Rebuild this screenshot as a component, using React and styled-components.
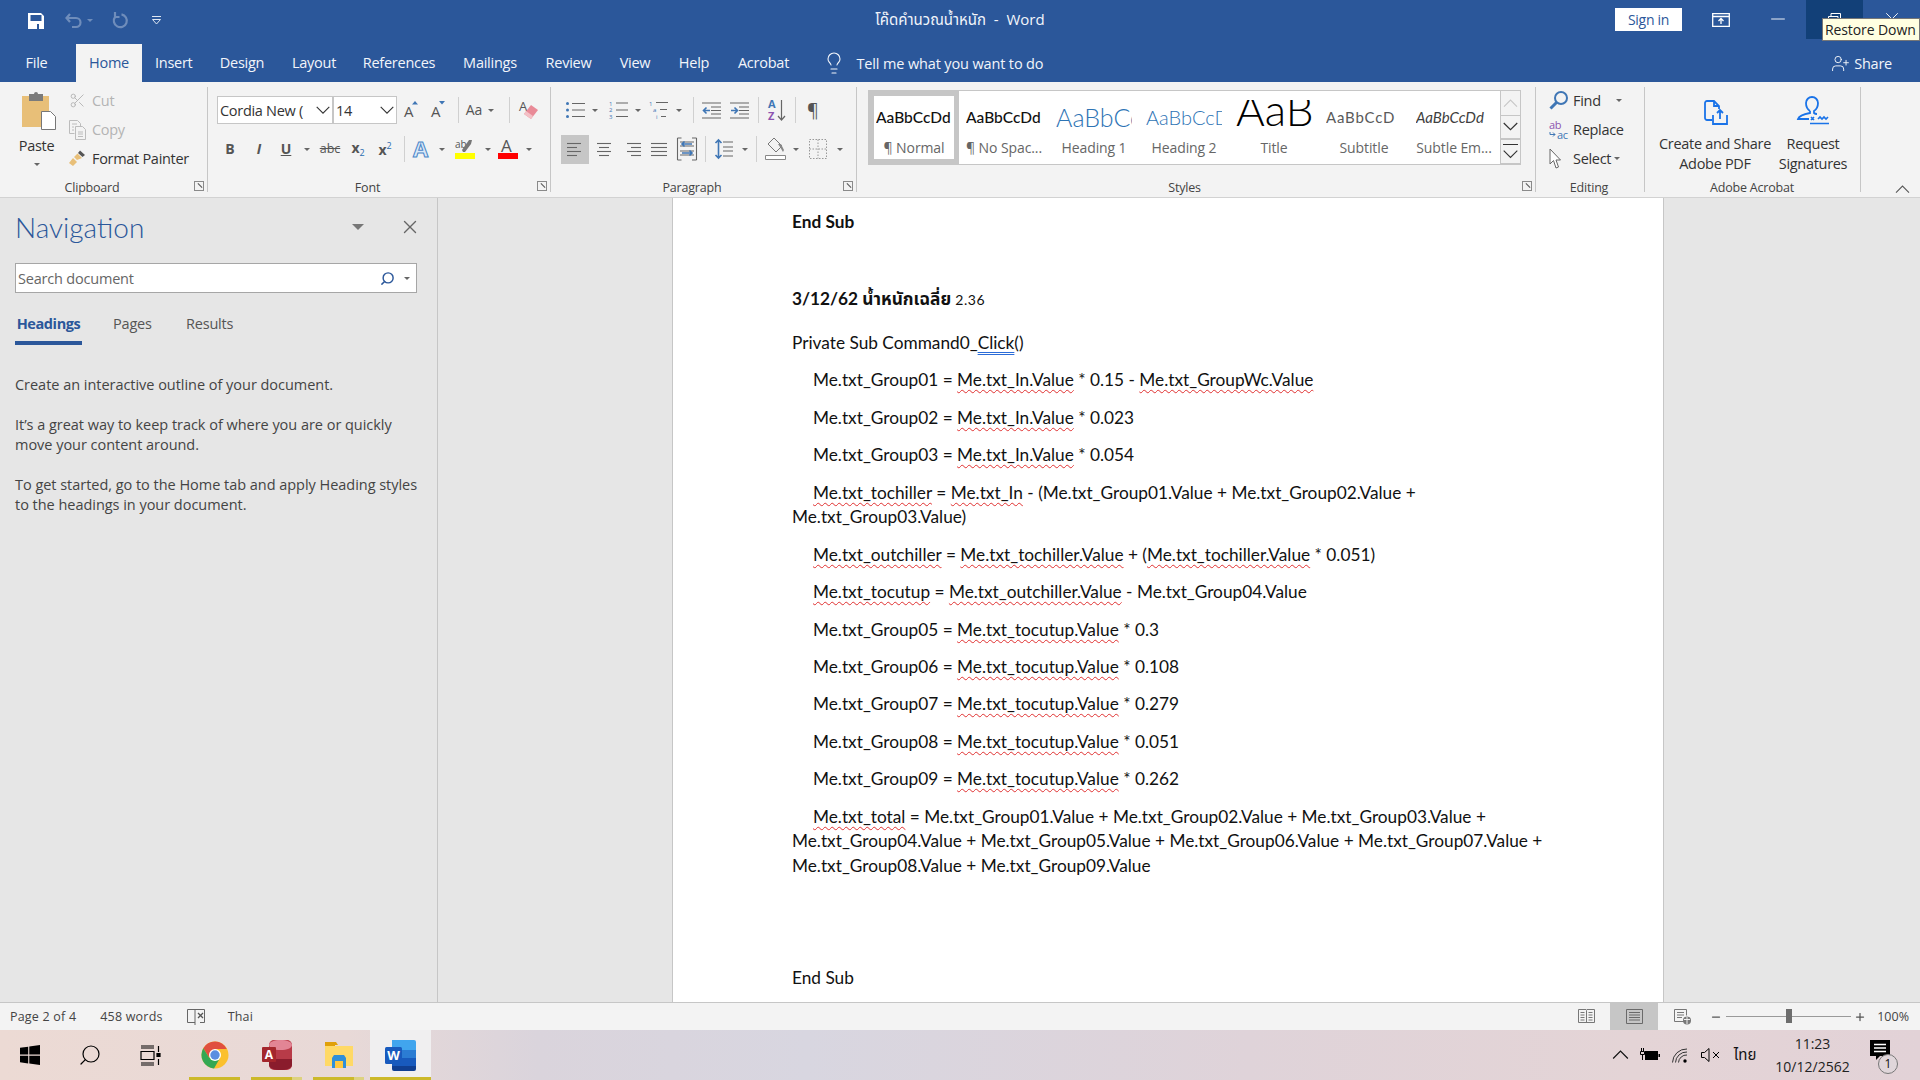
import React from 'react';
import styled, { createGlobalStyle, css } from 'styled-components';
import { Lightbulb, X, Scissors, Search, UserPlus, Minus, Plus } from 'lucide-react';

const UI = '"Open Sans","Noto Sans","Noto Sans Thai",sans-serif';
const BLUE = '#2b579a';

const Global = createGlobalStyle`
  html,body{margin:0;padding:0;width:1920px;height:1080px;overflow:hidden;background:#e6e6e6;}
  *{box-sizing:border-box;}
  body{font-family:${UI};color:#444;}
  svg{display:block;flex:none;overflow:visible;}
`;

const Shell = styled.div`width:1920px;height:1080px;display:flex;flex-direction:column;overflow:hidden;`;
const Mirror = styled.span`display:block;transform:scaleX(-1);`;

/* ---------- title bar ---------- */
const TitleBar = styled.header`height:41px;background:${BLUE};display:grid;grid-template-columns:1fr auto 1fr;align-items:start;color:#fff;`;
const Qat = styled.div`display:flex;align-items:center;height:41px;padding:0 0 0 28px;`;
const QatCell = styled.div`width:${p=>p.$w}px;display:flex;align-items:center;flex:none;`;
const DocTitle = styled.div`height:41px;line-height:39px;font-size:15px;white-space:pre;color:#f2f5fa;`;
const WinRight = styled.div`display:flex;justify-content:flex-end;align-items:flex-start;position:relative;`;
const SignIn = styled.div`width:67px;height:23px;margin:8px 10px 0 0;background:#fff;color:${BLUE};font-size:14px;line-height:23px;text-align:center;letter-spacing:-.3px;`;
const WinBtn = styled.div`width:57px;height:39px;display:flex;align-items:flex-start;justify-content:center;padding-top:${p=>p.$pt||13}px;background:${p=>p.$hover?'#124078':'transparent'};`;
const Tooltip = styled.div`position:absolute;top:18px;right:0;width:98px;height:23px;background:#ffffe1;border:1px solid #767676;color:#222;font-size:14px;line-height:22px;padding-left:2px;white-space:nowrap;letter-spacing:-.1px;`;

/* ---------- tabs ---------- */
const TabBar = styled.nav`height:41px;background:${BLUE};display:flex;align-items:flex-end;color:#fff;font-size:14.5px;letter-spacing:-.25px;`;
const Tab = styled.div`width:${p=>p.$w}px;padding-right:${p=>p.$pr||0}px;height:38px;line-height:37px;text-align:center;color:${p=>p.$on?BLUE:'#f2f5fa'};background:${p=>p.$on?'#f3f3f3':'transparent'};`;
const TellMe = styled.div`display:flex;align-items:center;height:38px;gap:11px;margin-left:18px;color:#f2f5fa;letter-spacing:-.14px;`;
const Share = styled.div`margin-left:auto;height:41px;display:flex;align-items:center;gap:4px;padding:4px 28px 0 0;color:#f2f5fa;`;

/* ---------- ribbon ---------- */
const Ribbon = styled.section`height:116px;background:#f3f3f3;border-bottom:1px solid #d2d2d2;display:flex;position:relative;`;
const Group = styled.div`width:${p=>p.$w}px;height:115px;display:flex;flex-direction:column;position:relative;flex:none;
  &::after{content:"";position:absolute;right:0;top:5px;bottom:5px;width:1px;background:#c6c6c6;}`;
const GroupBody = styled.div`flex:1;min-height:0;display:flex;padding:${p=>p.$pad||'0'};`;
const GroupLabel = styled.div`height:20px;line-height:22px;text-align:center;font-size:12.5px;color:#444;letter-spacing:-.2px;position:relative;padding-right:${p=>p.$pr||0}px;`;
const Launcher = styled.span`position:absolute;right:4px;top:4px;width:10px;height:10px;border:1px solid #8a8a8a;
  &::after{content:"";position:absolute;left:2px;top:3px;width:6px;height:1px;background:#555;transform:rotate(45deg);}`;
const Rows = styled.div`display:flex;flex-direction:column;`;
const ToolRow = styled.div`display:flex;align-items:center;height:${p=>p.$h||26}px;margin-top:${p=>p.$mt||0}px;`;
const Tool = styled.div`width:${p=>p.$w}px;height:29px;display:flex;align-items:center;justify-content:center;background:${p=>p.$on?'#c6c6c6':'transparent'};flex:none;`;
const Sep = styled.div`width:1px;height:${p=>p.$h||26}px;background:#d0d0d0;margin-left:${p=>p.$m||0}px;flex:none;`;
const Caret = styled.i`display:block;width:0;height:0;border-left:3px solid transparent;border-right:3px solid transparent;border-top:3px solid ${p=>p.$c||'#666'};flex:none;margin-left:${p=>p.$ml||0}px;`;
const Combo = styled.div`height:28px;width:${p=>p.$w}px;background:#fff;border:1px solid #c6c6c6;display:flex;align-items:center;justify-content:space-between;padding:0 2px 0 2px;font-size:14.5px;letter-spacing:-.3px;color:#333;overflow:hidden;white-space:nowrap;flex:none;`;
const FormatGlyph = styled.span`font-family:${UI};font-size:${p=>p.$s||14}px;font-weight:${p=>p.$b?700:400};font-style:${p=>p.$i?'italic':'normal'};color:#555;line-height:1;${p=>p.$u&&css`text-decoration:underline;`}${p=>p.$st&&css`text-decoration:line-through;`}`;
const Sub = styled.sub`font-size:9px;color:#2b6cb0;vertical-align:-3px;font-weight:400;`;
const Sup = styled.sup`font-size:9px;color:#2b6cb0;vertical-align:6px;font-weight:400;`;
const PasteBlock = styled.div`width:65px;margin-left:4px;display:flex;flex-direction:column;align-items:center;padding-top:10px;font-size:14.5px;letter-spacing:-.3px;color:#333;line-height:20px;`;
const PasteIconWrap = styled.div`margin-left:5px;`;
const PasteText = styled.div`margin:6px 0 7px;`;
const SmallCol = styled.div`display:flex;flex-direction:column;padding-top:4px;`;
const SmallBtn = styled.div`height:29px;display:flex;align-items:center;font-size:14.5px;letter-spacing:-.3px;color:${p=>p.$off?'#b4b4b4':'#333'};white-space:nowrap;`;
const SmallIcon = styled.span`width:${p=>p.$w||23}px;display:flex;align-items:center;justify-content:flex-start;flex:none;`;
const Gallery = styled.div`width:653px;height:75px;margin:8px 0 0 11px;display:flex;border:1px solid #c6c6c6;background:#fff;`;
const StyleItem = styled.div`width:90px;height:73px;flex:none;display:flex;flex-direction:column;align-items:center;overflow:hidden;padding-bottom:6px;${p=>p.$on&&css`box-shadow:inset 0 0 0 5px #c6c6c6;`}`;
const Preview = styled.div`margin-top:${p=>p.$top??4}px;height:${p=>p.$h||44}px;line-height:${p=>p.$lh||'44px'};width:76px;overflow:hidden;white-space:nowrap;text-align:left;font-family:Lato,sans-serif;color:${p=>p.$c||'#111'};font-size:${p=>p.$s||15.5}px;font-style:${p=>p.$i?'italic':'normal'};font-weight:${p=>p.$w||500};letter-spacing:${p=>p.$ls||0}px;`;
const PreviewLabel = styled.div`font-size:14px;letter-spacing:-.1px;color:#666;white-space:nowrap;line-height:20px;margin-top:auto;`;
const GalleryScroll = styled.div`display:flex;flex-direction:column;margin-left:auto;width:21px;margin-top:-1px;margin-right:-1px;`;
const ScrollBtn = styled.div`height:${p=>p.$h}px;border:1px solid #c6c6c6;margin-top:${p=>p.$mt||0}px;display:flex;align-items:center;justify-content:center;background:#f3f3f3;`;
const BigBtn = styled.div`width:${p=>p.$w}px;display:flex;flex-direction:column;align-items:center;padding-top:12px;font-size:14.5px;letter-spacing:-.3px;line-height:20px;color:#333;text-align:center;white-space:nowrap;`;
const BigIcon = styled.div`height:31px;display:flex;align-items:flex-end;`;
const BigText = styled.div`margin-top:9px;`;
const Collapse = styled.div`position:absolute;right:10px;bottom:4px;`;

/* ---------- main ---------- */
const Main = styled.main`flex:1;min-height:0;display:flex;background:#e6e6e6;`;
const Nav = styled.aside`width:438px;flex:none;border-right:1px solid #c6c6c6;padding:0 16px 0 15px;font-size:14.5px;color:#444;`;
const NavHead = styled.div`display:flex;align-items:center;height:54px;padding-top:4px;`;
const NavTitle = styled.h2`margin:0;font-size:28px;font-weight:300;color:${BLUE};flex:1;font-family:Lato,${UI};`;
const NavCaret = styled.i`width:0;height:0;border-left:6px solid transparent;border-right:6px solid transparent;border-top:6px solid #777;margin-right:35px;`;
const SearchBox = styled.div`height:30px;margin-top:11px;width:402px;background:#fff;border:1px solid #a6a6a6;display:flex;align-items:center;padding:0 6px 0 2px;color:#666;letter-spacing:-.2px;`;
const SearchText = styled.span`flex:1;`;
const NavTabs = styled.div`display:flex;margin-top:14px;height:38px;`;
const NavTab = styled.div`height:38px;line-height:33px;width:${p=>p.$w}px;color:${p=>p.$on?BLUE:'#555'};font-weight:${p=>p.$on?700:400};letter-spacing:-.2px;${p=>p.$on&&css`border-bottom:4px solid ${BLUE};text-align:center;margin-right:31px;letter-spacing:-.4px;`}`;
const NavText = styled.p`margin:${p=>p.$mt}px 0 0;line-height:20px;white-space:nowrap;letter-spacing:-.03px;`;
const Gutter = styled.div`flex:${p=>p.$w?`0 0 ${p.$w}px`:'1'};`;
const Page = styled.article`width:992px;flex:none;background:#fff;border-left:1px solid #c6c6c6;border-right:1px solid #c6c6c6;padding:12px 0 0 119px;font-family:Lato,"Noto Sans Thai",sans-serif;font-size:17.25px;line-height:24.6px;color:#111;overflow:hidden;`;
const Para = styled.p`margin:${p=>p.$mt||0}px 0 0;white-space:nowrap;font-weight:${p=>p.$b?700:400};padding-left:${p=>p.$in?21:0}px;`;
const Sq = styled.span`text-decoration:underline wavy #e03030;text-decoration-thickness:1px;text-underline-offset:3px;`;
const Gr = styled.span`text-decoration:underline double #2b6cd8;text-decoration-thickness:1px;text-underline-offset:3px;`;
const Small = styled.span`font-weight:400;font-size:14px;letter-spacing:.5px;`;

/* ---------- status ---------- */
const Status = styled.footer`height:28px;flex:none;background:#f3f3f3;border-top:1px solid #c6c6c6;display:flex;align-items:center;font-size:12.5px;letter-spacing:.2px;color:#444;`;
const StatusText = styled.span`margin-left:${p=>p.$ml}px;white-space:nowrap;`;
const StatusRight = styled.div`margin-left:auto;height:27px;padding-right:11px;display:flex;align-items:center;letter-spacing:0;`;
const ViewBtn = styled.div`width:48px;height:27px;display:flex;align-items:center;justify-content:center;background:${p=>p.$on?'#c6c6c6':'transparent'};`;
const ZoomOut = styled.span`display:block;margin-left:4px;`;
const Slider = styled.div`width:125px;height:1px;background:#9a9a9a;margin:0 3px 0 4px;position:relative;`;
const Thumb = styled.i`position:absolute;left:60px;top:-7px;width:6px;height:14px;background:#6d6d6d;`;

/* ---------- taskbar ---------- */
const Taskbar = styled.div`height:50px;flex:none;display:flex;align-items:stretch;background:linear-gradient(90deg,#ecdad4 0%,#e8d9d7 18%,#dad4dc 28%,#d8d6e0 42%,#dfd3d9 65%,#e4d4d6 85%,#e2d2d7 100%);`;
const TaskIcon = styled.div`width:${p=>p.$w}px;flex:none;display:flex;align-items:center;justify-content:center;margin-left:${p=>p.$ml||0}px;background:${p=>p.$on?'#f0eff0':'transparent'};position:relative;
  ${p=>p.$run&&css`&::after{content:"";position:absolute;left:0;right:0;bottom:0;height:3px;background:#ccb92a;}`}
  ${p=>p.$extra&&css`&::before{content:"";position:absolute;right:0;bottom:0;width:10px;height:3px;background:#ddd27f;z-index:1;}`}`;
const Tray = styled.div`margin-left:auto;display:flex;align-items:center;color:#111;`;
const TrayCell = styled.div`width:${p=>p.$w}px;display:flex;justify-content:center;align-items:center;font-size:${p=>p.$s||14}px;`;
const Clock = styled.div`width:95px;text-align:center;font-size:14px;line-height:23px;color:#222;`;
const Notify = styled.div`width:60px;position:relative;height:30px;display:flex;justify-content:center;padding-right:20px;`;
const Badge = styled.span`position:absolute;left:18px;top:14px;width:20px;height:20px;border-radius:50%;border:1px solid #777;background:#e0d6da;font-size:12px;line-height:18px;text-align:center;color:#111;`;

/* ---------- icons ---------- */
const SaveIcon=()=>(<svg width="16" height="16" viewBox="0 0 16 16"><path fillRule="evenodd" fill="#fff" d="M0 0h13l3 3v13H0zM2.500 2v6h11V2zM9 11v5h2v-5z"/></svg>);
const UndoIcon=()=>(<svg width="18" height="16" viewBox="0 0 18 16" fill="none" stroke="#6f8dbb" strokeWidth="2.2"><path d="M5 1 1.500 5 5 9M2 5h9a4.500 4.500 0 0 1 0 9H7"/></svg>);
const RedoIcon=()=>(<svg width="16" height="17" viewBox="0 0 16 17" fill="none" stroke="#6f8dbb" strokeWidth="2.200"><path d="M9.500 2.300a6.500 6.500 0 1 1-6.300 2.400M3 0v5h4.500"/></svg>);
const QatMore=()=>(<svg width="11" height="9" viewBox="0 0 11 9" fill="none" stroke="#dfe7f2"><path d="M1 .5h9M1.500 3.500h8L5.500 8z"/></svg>);
const RibbonOpt=()=>(<svg width="18" height="14" viewBox="0 0 18 14" fill="none" stroke="#fff" strokeWidth="1.300"><path d="M.7.7h16.600v12.600H.7zM.7 3.500h16.600"/><path d="M9 11V6M6.500 8 9 5.500 11.500 8"/></svg>);
const RestoreIcon=()=>(<svg width="13" height="12" viewBox="0 0 13 12" fill="none" stroke="#fff"><path d="M3 3V.5h9.500V8H10M.5 3.500h9.500v8H.5z"/></svg>);
const ClipIcon=()=>(<svg width="34" height="38" viewBox="0 0 34 38"><path fill="#e8bf78" d="M0 4h27v31H0z"/><path fill="#7b7b7b" d="M7 2h5a2 2 0 0 1 4 0h5v7H7z"/><path fill="#fff" stroke="#777" d="M19.500 19.500h9l5 5v13h-14z"/></svg>);
const CopyIc=()=>(<svg width="18" height="20" viewBox="0 0 18 20" fill="none" stroke="#bcbcbc"><path d="M.5.500h8l3 3v3M.5.500v13h5M6.500 6.500h7l3 3v10h-10zM3 4h5M3 7h2M3 10h2M9 12h5M9 14h5M9 16.500h5"/></svg>);
const BrushIc=()=>(<svg width="17" height="17" viewBox="0 0 17 17"><path fill="#555" d="M11 .5 16 5l-2.500 2L9 3z"/><path fill="#e8bf78" d="M8.500 3.500 13 8l-5 2-3-3zM4 8l4 4-4 4-4-3z"/></svg>);
const ChevD=({w=14,c='#333'})=>(<svg width={w} height={w*0.6} viewBox="0 0 14 8" fill="none" stroke={c} strokeWidth="1.100"><path d="m.7.700 6.300 6.300 6.300-6.300"/></svg>);
const ChevMore=()=>(<svg width="15" height="15" viewBox="0 0 15 15" fill="none" stroke="#333" strokeWidth="1.100"><path d="M0 .5h15M.7 6.700l6.800 6.800 6.800-6.800"/></svg>);
const GrowIc=({up})=>(<svg width="17" height="20" viewBox="0 0 17 20"><text x="0" y="17" fontFamily="Open Sans" fontSize="15" fill="#555">A</text><path fill="#3f76b5" d={up?'M8 4.500 11 1l3 3.500z':'M8 1h6l-3 3.500z'}/></svg>);
const EraserIc=()=>(<svg width="20" height="24" viewBox="0 0 20 24"><text x="0" y="13" fontFamily="Open Sans" fontSize="13" fill="#555">A</text><path fill="#e98a97" d="m12 7 7 5-7 9-7-5z"/><path fill="#f3c0c6" d="m5 16 7 5 2-3-7-5z"/></svg>);
const AlignIc=({kind})=>{const r={l:[14,10,14,10],c:[14,10,14,10],r:[14,10,14,10],j:[16,16,16,16]}[kind];return(<svg width="16" height="15" viewBox="0 0 16 15" stroke="#666" strokeWidth="1.100">{r.map((w,i)=>{const y=1.5+i*4;const x=kind==='l'||kind==='j'?0:kind==='c'?(16-w)/2:16-w;return <path key={i} d={`M${x} ${y}h${w}`}/>;})}</svg>);};
const BulletIc=()=>(<svg width="19" height="18" viewBox="0 0 19 18" stroke="#666" strokeWidth="1.100"><circle cx="1.500" cy="2.500" r="1.500" fill="#3f76b5" stroke="none"/><circle cx="1.500" cy="9" r="1.500" fill="#3f76b5" stroke="none"/><circle cx="1.500" cy="15.500" r="1.500" fill="#3f76b5" stroke="none"/><path d="M6 2.500h13M6 9h13M6 15.500h13"/></svg>);
const NumberIc=()=>(<svg width="19" height="20" viewBox="0 0 19 20" stroke="#666" strokeWidth="1.100"><text x="0" y="5.500" fontSize="6" fill="#3f76b5" stroke="none" fontFamily="Open Sans">1</text><text x="0" y="12" fontSize="6" fill="#3f76b5" stroke="none" fontFamily="Open Sans">2</text><text x="0" y="18.500" fontSize="6" fill="#3f76b5" stroke="none" fontFamily="Open Sans">3</text><path d="M7 3h12M7 10h12M7 16.500h12"/></svg>);
const MultiIc=()=>(<svg width="19" height="20" viewBox="0 0 19 20" stroke="#666" strokeWidth="1.100"><text x="0" y="5.500" fontSize="6" fill="#3f76b5" stroke="none" fontFamily="Open Sans">1</text><text x="4" y="12" fontSize="6" fill="#3f76b5" stroke="none" fontFamily="Open Sans">a</text><text x="7" y="18.500" fontSize="6" fill="#3f76b5" stroke="none" fontFamily="Open Sans">i</text><path d="M7 2.500h12M11 9.500h7M12 16.500h5"/></svg>);
const IndentIc=({rev})=>(<svg width="19" height="17" viewBox="0 0 19 17" stroke="#666" strokeWidth="1.100"><path d="M0 1h19M9 5h10M9 8.500h10M9 12h10M0 16h19"/><path stroke="#3f76b5" strokeWidth="1.600" fill="none" d={rev?'M1 8.500h6M4.500 5.500l3 3-3 3':'M8 8.500H2M4.500 5.500l-3 3 3 3'}/></svg>);
const SortIc=()=>(<svg width="18" height="24" viewBox="0 0 18 24"><text x="0" y="10" fontSize="11" fontWeight="700" fill="#3f76b5" fontFamily="Open Sans">A</text><text x="0" y="22" fontSize="11" fontWeight="700" fill="#8d54b0" fontFamily="Open Sans">Z</text><path stroke="#666" strokeWidth="1.200" fill="none" d="M13.500 2v20M10 18l3.500 4 3.500-4"/></svg>);
const DistIc=()=>(<svg width="20" height="24" viewBox="0 0 20 24" stroke="#666" strokeWidth="1.100" fill="none"><path d="M.5 1v22M19.500 1v22M.5 1h4M15 1h4.500M.5 23h4M15 23h4.500M3 5h14M3 9h14M3 14h14M3 18h14"/><path stroke="#3f76b5" strokeWidth="1.600" d="M15 7H5M7.500 4.500 5 7l2.500 2.500M5 16h10M12.500 13.500 15 16l-2.500 2.500"/></svg>);
const SpacingIc=()=>(<svg width="18" height="20" viewBox="0 0 18 20" stroke="#666" strokeWidth="1.100" fill="none"><path d="M8 3h10M8 8h10M8 12h10M8 17h10"/><path stroke="#3f76b5" strokeWidth="1.600" d="M3.500 1v18M.5 4l3-3 3 3M.5 16l3 3 3-3"/></svg>);
const FillIc=()=>(<svg width="21" height="24" viewBox="0 0 21 24" fill="none"><path stroke="#777" d="m9 1 8 8-6 6-8-8z"/><path fill="#888" d="M13 7h3l3 6-1 2-3-5z"/><path stroke="#888" fill="#fff" d="M.5 18.500h20v4H.5z"/></svg>);
const BorderIc=()=>(<svg width="18" height="20" viewBox="0 0 18 20" fill="none" stroke="#999" strokeDasharray="1.500 1.500"><path d="M.5.500h17v19H.5zM9 .5v19M.5 10h17"/></svg>);
const TextEffectIc=()=>(<svg width="17" height="20" viewBox="0 0 17 20"><text x="-1" y="18" fontSize="22" fontWeight="700" fontFamily="Open Sans" fill="#dbe9f7" stroke="#4a86c8" strokeWidth="1">A</text></svg>);
const HighlightIc=()=>(<svg width="20" height="20" viewBox="0 0 20 20"><text x="0" y="9" fontSize="10" fill="#555" fontFamily="Open Sans">ab</text><path fill="#777" d="M14 1h3l-1 4-6 8H8l-1-2z"/><path fill="#ff0" d="M0 14h20v6H0z"/></svg>);
const ColorIc=()=>(<svg width="20" height="20" viewBox="0 0 20 20"><text x="3" y="13" fontSize="17" fill="#555" fontFamily="Open Sans">A</text><path fill="#f00" d="M0 14h20v6H0z"/></svg>);
const FindIc=()=>(<svg width="19" height="19" viewBox="0 0 19 19" fill="none" stroke="#3f76b5" strokeWidth="2"><circle cx="12" cy="7" r="6"/><path strokeWidth="3" d="M7.500 11.500 1.500 17.500"/></svg>);
const ReplaceIc=()=>(<svg width="21" height="20" viewBox="0 0 21 20"><text x="0" y="9" fontSize="11" fill="#8d54b0" fontFamily="Open Sans">ab</text><text x="8" y="19" fontSize="11" fill="#3f76b5" fontFamily="Open Sans">ac</text><path stroke="#3f76b5" fill="none" d="M1 12v2.500h5M4 12.500l2 2-2 2"/></svg>);
const SelectIc=()=>(<svg width="12" height="21" viewBox="0 0 12 21" fill="#fff" stroke="#666"><path d="M1 1v15l3.500-3.500L7 20l2.500-1-2.500-7h4.500z"/></svg>);
const PdfIc=()=>(<svg width="25" height="25" viewBox="0 0 25 25" fill="none" stroke="#1a73e8" strokeWidth="1.800"><path d="M9 20H4a2 2 0 0 1-2-2V3a2 2 0 0 1 2-2h7l5 5v3M11 1v5h5"/><path d="M10 15v9h14v-9M17 19v-9M14 13l3-3 3 3"/></svg>);
const SignIc=()=>(<svg width="33" height="28" viewBox="0 0 33 28" fill="none" stroke="#1a73e8" strokeWidth="1.800"><path d="M13 14c-3-2-4-5-4-8a6 6 0 0 1 12 0c0 3-1 6-4 8v2c1 1 3 1 3 1M13 14v2c-5 1-11 3-12 6h11"/><path strokeWidth="1.600" d="M13 26.500h19M14 20l3 3m0-3-3 3M21 22l2-2 2 2 2-2 2 2 2-2"/></svg>);
const ChevU=({c='#555',w=15})=>(<svg width={w} height={w*0.55} viewBox="0 0 14 8" fill="none" stroke={c}><path d="m.7 7.300 6.300-6.300 6.300 6.300"/></svg>);
const ProofIc=()=>(<svg width="18" height="16" viewBox="0 0 18 16" fill="none" stroke="#666"><path d="M8 .5H.5v13H8M8 0v16M8 .5h9.500v13H13"/><path d="m11 4 5 5m0-5-5 5" stroke="#555" strokeWidth="1.300"/></svg>);
const ReadIc=()=>(<svg width="17" height="15" viewBox="0 0 17 15" fill="none" stroke="#777"><path d="M.5.500h7.500l.5 1 .5-1h7.500v13H.5zM8.500 2v12M2.500 3.500h4M2.500 6h4M2.500 8.500h4M2.500 11h4M10.500 3.500h4M10.500 6h4M10.500 8.500h4M10.500 11h4"/></svg>);
const PrintIc=()=>(<svg width="17" height="15" viewBox="0 0 17 15" fill="none" stroke="#6a6a6a"><path d="M.5.500h16v14H.5zM3 3.500h11M3 6h11M3 8.500h11M3 11h11"/></svg>);
const WebIc=()=>(<svg width="17" height="16" viewBox="0 0 17 16" fill="none" stroke="#777"><path d="M10 12.500H.5V.5h12v6M3 3.500h7M3 6h7M3 8.500h5"/><circle cx="13" cy="11.500" r="4" fill="#777" stroke="none"/><path stroke="#eee" d="M10 10.500h6M13 8v7"/></svg>);
const WinLogo=()=>(<svg width="20" height="20" viewBox="0 0 20 20" fill="#000"><path d="M0 2.800 8.200 1.700v7.900H0zM9.300 1.500 20 0v9.600H9.300zM0 10.700h8.200v7.700L0 17.300zM9.300 10.700H20V20L9.300 18.500z"/></svg>);
const TaskView=()=>(<svg width="20" height="21" viewBox="0 0 20 21" fill="none" stroke="#000" strokeWidth="1.200"><path d="M1 1h13M1 20h13M1 6.500h13v8H1zM1 3h13M1 18h13M18.500 1v6M18.500 14v6"/><path d="M17 8.500h3v3h-3z" fill="#000"/></svg>);
const ChromeIc=()=>(<svg width="28" height="28" viewBox="0 0 28 28"><circle cx="14" cy="14" r="13.500" fill="#fbc02d"/><path fill="#e04f3f" d="M14 .5A13.500 13.500 0 0 0 2.300 7.200L8 16.500 14 8h11.700A13.500 13.500 0 0 0 14 .5"/><path fill="#33a853" d="M2.300 7.200A13.500 13.500 0 0 0 13 27.500L19 17l-11-.500z"/><circle cx="14" cy="14" r="6" fill="#fff"/><circle cx="14" cy="14" r="4.700" fill="#5a8ee0"/></svg>);
const AccessIc=()=>(<svg width="30" height="30" viewBox="0 0 30 30"><rect x="7" y="0" width="23" height="30" rx="5" fill="#b83b48"/><path fill="#e28595" d="M7 5c0-3 5-5 11.500-5S30 2 30 5s-5 5-11.500 5S7 8 7 5"/><path fill="#8a1c2c" d="M7 24v1c0 3 5 5 11.500 5S30 28 30 25v-6H7z"/><rect x="0" y="7" width="14" height="15" rx="1" fill="#a4262c"/><text x="7" y="19" textAnchor="middle" fontSize="12" fontWeight="700" fill="#fff" fontFamily="Open Sans">A</text></svg>);
const FolderIc=()=>(<svg width="28" height="28" viewBox="0 0 28 28"><path fill="#e0a009" d="M0 1h11l2 3h-3v3H0z"/><path fill="#ffd966" d="M0 5h28v20H0z"/><path fill="#2f8fd8" d="M9 14h10l2 3v10h-3v-7h-8v7H7V17z"/><path fill="#ffc83d" d="M10 20h8v7h-8z"/></svg>);
const WordIc=()=>(<svg width="31" height="31" viewBox="0 0 31 31"><path fill="#41a5ee" d="M7 0h22a2 2 0 0 1 2 2v8H7z"/><path fill="#2b7cd3" d="M7 10h24v8H7z"/><path fill="#185abd" d="M7 18h24v8H7z"/><path fill="#103f91" d="M7 26h24v3a2 2 0 0 1-2 2H9a2 2 0 0 1-2-2z"/><rect x="0" y="7" width="17" height="17" rx="1.500" fill="#185abd"/><text x="8.500" y="20" textAnchor="middle" fontSize="13" fontWeight="700" fill="#fff" fontFamily="Open Sans">W</text></svg>);
const BatteryIc=()=>(<svg width="20" height="14" viewBox="0 0 20 14"><path fill="#000" d="M5 3h13v9H5zM18.500 6H20v3h-1.500z"/><path fill="none" stroke="#000" d="M.5 3.500h4v3h-4zM2.500 6.500V12M1.500 0v3.500M3.500 0v3.500"/></svg>);
const WifiIc=()=>(<svg width="16" height="15" viewBox="0 0 16 15" fill="none" stroke="#333"><path d="M.5 14.500A14 14 0 0 1 15 1M3.500 14.500A11 11 0 0 1 15 4M6.500 14.500A8 8 0 0 1 15 7"/><circle cx="13" cy="13" r="1.700" fill="#000" stroke="none"/></svg>);
const MuteIc=()=>(<svg width="19" height="14" viewBox="0 0 19 14" fill="none" stroke="#000"><path d="M.5 4.500h3L8 .5v13l-4.500-4h-3zM12 4l6 6m0-6-6 6"/></svg>);
const NotifyIc=()=>(<svg width="20" height="20" viewBox="0 0 20 20"><path fill="#000" d="M0 0h20v16H10l-4 4v-4H0z"/><path stroke="#fff" strokeWidth="1.300" d="M4 4.500h12M4 8h12M4 11.500h12"/></svg>);

const tabs=[['File',76,0,3],['Home',66,1],['Insert',63.5],['Design',73],['Layout',71],['References',99],['Mailings',83],['Review',74],['View',59],['Help',59],['Acrobat',80]];

const App=()=>(
<Shell><Global/>
<TitleBar>
  <Qat><QatCell $w={37}><SaveIcon/></QatCell><QatCell $w={22}><UndoIcon/></QatCell><Caret $c="#6f8dbb"/><QatCell $w={19}/><QatCell $w={39}><RedoIcon/></QatCell><QatCell $w={10}><QatMore/></QatCell></Qat>
  <DocTitle>โค๊ดคำนวณน้ำหนัก  -  Word</DocTitle>
  <WinRight><SignIn>Sign in</SignIn><WinBtn><RibbonOpt/></WinBtn><WinBtn $pt={8}><Minus size={22} color="#fff" strokeWidth={1}/></WinBtn><WinBtn $hover><RestoreIcon/></WinBtn><WinBtn $pt={8}><X size={22} color="#fff" strokeWidth={1}/></WinBtn><Tooltip>Restore Down</Tooltip></WinRight>
</TitleBar>
<TabBar>
  {tabs.map(([t,w,on,pr])=><Tab key={t} $w={w} $on={on} $pr={pr}>{t}</Tab>)}
  <TellMe><Lightbulb size={24} color="#f2f5fa" strokeWidth={1.100}/>Tell me what you want to do</TellMe>
  <Share><UserPlus size={19} color="#f2f5fa" strokeWidth={1.200}/>Share</Share>
</TabBar>
<Ribbon>
  <Group $w={208}>
    <GroupBody>
      <PasteBlock><PasteIconWrap><ClipIcon/></PasteIconWrap><PasteText>Paste</PasteText><Caret/></PasteBlock>
      <SmallCol>
        <SmallBtn $off><SmallIcon><Scissors size={17} color="#b4b4b4" strokeWidth={1.300}/></SmallIcon>Cut</SmallBtn>
        <SmallBtn $off><SmallIcon><CopyIc/></SmallIcon>Copy</SmallBtn>
        <SmallBtn><SmallIcon><BrushIc/></SmallIcon>Format Painter</SmallBtn>
      </SmallCol>
    </GroupBody>
    <GroupLabel $pr={24}>Clipboard<Launcher/></GroupLabel>
  </Group>
  <Group $w={343}>
    <GroupBody $pad="14px 0 0 9px">
      <Rows>
        <ToolRow $h={28}>
          <Combo $w={116}>Cordia New (<ChevD/></Combo><Combo $w={64}>14<ChevD/></Combo>
          <Tool $w={30}><GrowIc up/></Tool><Tool $w={24}><GrowIc/></Tool><Sep $m={7}/>
          <Tool $w={42}><FormatGlyph $s={14}>Aa</FormatGlyph><Caret $ml={6}/></Tool><Sep $m={8}/><Tool $w={38}><EraserIc/></Tool>
        </ToolRow>
        <ToolRow $mt={12}>
          <Tool $w={26}><FormatGlyph $b $s={14}>B</FormatGlyph></Tool><Tool $w={32}><FormatGlyph $i $b $s={14}>I</FormatGlyph></Tool><Tool $w={22}><FormatGlyph $b $u $s={14}>U</FormatGlyph></Tool><Tool $w={20}><Caret/></Tool>
          <Tool $w={26}><FormatGlyph $st $s={12.5}>abc</FormatGlyph></Tool><Tool $w={30}><FormatGlyph $b $s={14}>x<Sub>2</Sub></FormatGlyph></Tool><Tool $w={24}><FormatGlyph $b $s={14}>x<Sup>2</Sup></FormatGlyph></Tool><Sep $m={7}/>
          <Tool $w={34}><TextEffectIc/></Tool><Tool $w={6}><Caret/></Tool><Tool $w={40}><HighlightIc/></Tool><Tool $w={6}><Caret/></Tool><Tool $w={34}><ColorIc/></Tool><Tool $w={8}><Caret/></Tool>
        </ToolRow>
      </Rows>
    </GroupBody>
    <GroupLabel $pr={24}>Font<Launcher/></GroupLabel>
  </Group>
  <Group $w={306}>
    <GroupBody $pad="14px 0 0 10px">
      <Rows>
        <ToolRow $h={28}>
          <Tool $w={28}><BulletIc/></Tool><Tool $w={12}><Caret/></Tool><Tool $w={34}><NumberIc/></Tool><Tool $w={6}><Caret/></Tool><Tool $w={35}><MultiIc/></Tool><Tool $w={6}><Caret/></Tool><Sep $m={11}/>
          <Tool $w={35}><IndentIc/></Tool><Tool $w={21}><IndentIc rev/></Tool><Sep $m={8}/><Tool $w={36}><SortIc/></Tool><Sep/><Tool $w={34}><FormatGlyph $s={18}>¶</FormatGlyph></Tool>
        </ToolRow>
        <ToolRow $mt={12}>
          <Tool $w={28} $on><AlignIc kind="l"/></Tool><Tool $w={29}><AlignIc kind="c"/></Tool><Tool $w={30}><AlignIc kind="r"/></Tool><Tool $w={22}><AlignIc kind="j"/></Tool><Tool $w={34}><DistIc/></Tool><Sep $m={1}/>
          <Tool $w={36}><SpacingIc/></Tool><Tool $w={6}><Caret/></Tool><Sep $m={8}/><Tool $w={36}><FillIc/></Tool><Tool $w={6}><Caret/></Tool><Tool $w={37}><BorderIc/></Tool><Tool $w={8}><Caret/></Tool>
        </ToolRow>
      </Rows>
    </GroupBody>
    <GroupLabel $pr={24}>Paragraph<Launcher/></GroupLabel>
  </Group>
  <Group $w={679}>
    <GroupBody>
      <Gallery>
        <StyleItem $on><Preview>AaBbCcDd</Preview><PreviewLabel>¶ Normal</PreviewLabel></StyleItem>
        <StyleItem><Preview>AaBbCcDd</Preview><PreviewLabel>¶ No Spac...</PreviewLabel></StyleItem>
        <StyleItem><Preview $c="#2e74b5" $s={25} $w={300}>AaBbCcDd</Preview><PreviewLabel>Heading 1</PreviewLabel></StyleItem>
        <StyleItem><Preview $c="#2e74b5" $s={20} $w={300}>AaBbCcDd</Preview><PreviewLabel>Heading 2</PreviewLabel></StyleItem>
        <StyleItem><Preview $c="#000" $s={44} $w={300} $top={9} $h={27} $lh="18px">AaB</Preview><PreviewLabel>Title</PreviewLabel></StyleItem>
        <StyleItem><Preview $c="#5a5a5a" $s={15} $ls={.8} $w={400}>AaBbCcD</Preview><PreviewLabel>Subtitle</PreviewLabel></StyleItem>
        <StyleItem><Preview $c="#404040" $s={15} $i $w={400}>AaBbCcDd</Preview><PreviewLabel>Subtle Em...</PreviewLabel></StyleItem>
        <GalleryScroll><ScrollBtn $h={27}><ChevU c="#c6c6c6"/></ScrollBtn><ScrollBtn $h={24} $mt={-1}><ChevD w={15}/></ScrollBtn><ScrollBtn $h={26}><ChevMore/></ScrollBtn></GalleryScroll>
      </Gallery>
    </GroupBody>
    <GroupLabel $pr={24}>Styles<Launcher/></GroupLabel>
  </Group>
  <Group $w={109}>
    <GroupBody $pad="0 0 0 13px">
      <SmallCol>
        <SmallBtn><SmallIcon $w={24}><FindIc/></SmallIcon>Find<Caret $ml={15}/></SmallBtn>
        <SmallBtn><SmallIcon $w={24}><ReplaceIc/></SmallIcon>Replace</SmallBtn>
        <SmallBtn><SmallIcon $w={24}><SelectIc/></SmallIcon>Select<Caret $ml={3}/></SmallBtn>
      </SmallCol>
    </GroupBody>
    <GroupLabel $pr={3}>Editing</GroupLabel>
  </Group>
  <Group $w={216}>
    <GroupBody $pad="0 0 0 15px">
      <BigBtn $w={110}><BigIcon><PdfIc/></BigIcon><BigText>Create and Share<br/>Adobe PDF</BigText></BigBtn>
      <BigBtn $w={86}><BigIcon><SignIc/></BigIcon><BigText>Request<br/>Signatures</BigText></BigBtn>
    </GroupBody>
    <GroupLabel $pr={2}>Adobe Acrobat</GroupLabel>
  </Group>
  <Collapse><ChevU/></Collapse>
</Ribbon>
<Main>
  <Nav>
    <NavHead><NavTitle>Navigation</NavTitle><NavCaret/><X size={22} color="#666" strokeWidth={1.500}/></NavHead>
    <SearchBox><SearchText>Search document</SearchText><Mirror><Search size={15} color={BLUE} strokeWidth={2.300}/></Mirror><Caret $ml={9}/></SearchBox>
    <NavTabs><NavTab $on $w={67}>Headings</NavTab><NavTab $w={73}>Pages</NavTab><NavTab $w={60}>Results</NavTab></NavTabs>
    <NavText $mt={30}>Create an interactive outline of your document.</NavText>
    <NavText $mt={20}>It’s a great way to keep track of where you are or quickly<br/>move your content around.</NavText>
    <NavText $mt={20}>To get started, go to the Home tab and apply Heading styles<br/>to the headings in your document.</NavText>
  </Nav>
  <Gutter $w={234}/>
  <Page>
    <Para $b>End Sub</Para>
    <Para $b $mt={52.500}>3/12/62 น้ำหนักเฉลี่ย <Small>2.36</Small></Para>
    <Para $mt={18}>Private Sub Command0_<Gr>Click</Gr>()</Para>
    <Para $in $mt={13}>Me.txt_Group01 = <Sq>Me.txt_In.Value</Sq> * 0.15 - <Sq>Me.txt_GroupWc.Value</Sq></Para>
    <Para $in $mt={12.850}>Me.txt_Group02 = <Sq>Me.txt_In.Value</Sq> * 0.023</Para>
    <Para $in $mt={12.850}>Me.txt_Group03 = <Sq>Me.txt_In.Value</Sq> * 0.054</Para>
    <Para $in $mt={12.850}><Sq>Me.txt_tochiller</Sq> = <Sq>Me.txt_In</Sq> - (Me.txt_Group01.Value + Me.txt_Group02.Value +</Para>
    <Para>Me.txt_Group03.Value)</Para>
    <Para $in $mt={12.850}><Sq>Me.txt_outchiller</Sq> = <Sq>Me.txt_tochiller.Value</Sq> + (<Sq>Me.txt_tochiller.Value</Sq> * 0.051)</Para>
    <Para $in $mt={12.850}><Sq>Me.txt_tocutup</Sq> = <Sq>Me.txt_outchiller.Value</Sq> - Me.txt_Group04.Value</Para>
    <Para $in $mt={12.850}>Me.txt_Group05 = <Sq>Me.txt_tocutup.Value</Sq> * 0.3</Para>
    <Para $in $mt={12.850}>Me.txt_Group06 = <Sq>Me.txt_tocutup.Value</Sq> * 0.108</Para>
    <Para $in $mt={12.850}>Me.txt_Group07 = <Sq>Me.txt_tocutup.Value</Sq> * 0.279</Para>
    <Para $in $mt={12.850}>Me.txt_Group08 = <Sq>Me.txt_tocutup.Value</Sq> * 0.051</Para>
    <Para $in $mt={12.850}>Me.txt_Group09 = <Sq>Me.txt_tocutup.Value</Sq> * 0.262</Para>
    <Para $in $mt={12.850}><Sq>Me.txt_total</Sq> = Me.txt_Group01.Value + Me.txt_Group02.Value + Me.txt_Group03.Value +</Para>
    <Para>Me.txt_Group04.Value + Me.txt_Group05.Value + Me.txt_Group06.Value + Me.txt_Group07.Value +</Para>
    <Para>Me.txt_Group08.Value + Me.txt_Group09.Value</Para>
    <Para $mt={88}>End Sub</Para>
  </Page>
  <Gutter/>
</Main>
<Status>
  <StatusText $ml={10}>Page 2 of 4</StatusText><StatusText $ml={24}>458 words</StatusText><StatusText $ml={24}><ProofIc/></StatusText><StatusText $ml={23}>Thai</StatusText>
  <StatusRight>
    <ViewBtn><ReadIc/></ViewBtn><ViewBtn $on><PrintIc/></ViewBtn><ViewBtn><WebIc/></ViewBtn>
    <ZoomOut><Minus size={12} color="#555" strokeWidth={2.500}/></ZoomOut><Slider><Thumb/></Slider><Plus size={12} color="#555" strokeWidth={2.500}/><StatusText $ml={11}>100%</StatusText>
  </StatusRight>
</Status>
<Taskbar>
  <TaskIcon $w={60}><WinLogo/></TaskIcon><TaskIcon $w={60}><Mirror><Search size={24} color="#000" strokeWidth={1.200}/></Mirror></TaskIcon><TaskIcon $w={60}><TaskView/></TaskIcon>
  <TaskIcon $w={51} $ml={9} $run><ChromeIc/></TaskIcon><TaskIcon $w={51} $ml={11} $run $extra><AccessIc/></TaskIcon><TaskIcon $w={51} $ml={11} $run $extra><FolderIc/></TaskIcon><TaskIcon $w={61} $ml={6} $run $on><WordIc/></TaskIcon>
  <Tray>
    <TrayCell $w={29}><ChevU c="#111" w={17}/></TrayCell><TrayCell $w={30}><BatteryIc/></TrayCell><TrayCell $w={30}><WifiIc/></TrayCell><TrayCell $w={30}><MuteIc/></TrayCell><TrayCell $w={40} $s={15}>ไทย</TrayCell><Clock>11:23<br/>10/12/2562</Clock>
    <Notify><NotifyIc/><Badge>1</Badge></Notify>
  </Tray>
</Taskbar>
</Shell>
);
export default App;
